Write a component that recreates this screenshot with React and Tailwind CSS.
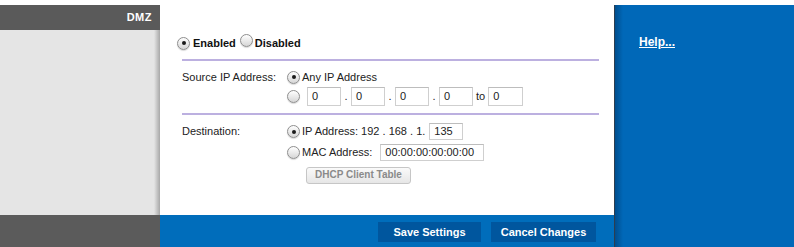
import React from 'react';

function Radio({ checked }) {
    return (
        <span className="relative inline-flex w-[13px] h-[13px] shrink-0 items-center justify-center rounded-full border border-[#8e8e8e] bg-gradient-to-b from-[#ffffff] to-[#d6d6d6] shadow-[0_1px_1px_rgba(0,0,0,0.15)]">
            {checked && <span className="w-[4px] h-[4px] rounded-full bg-[#1a1a1a]" />}
        </span>
    );
}

function Box({ value, className = '' }) {
    return (
        <span
            className={`inline-flex items-center border border-[#cfcfcf] border-t-[#bdbdbd] bg-white pl-[4px] text-[11px] text-[#333]${className ? ' ' + className : ''}`}
        >
            {value}
        </span>
    );
}

function Dot() {
    return <span className="w-[10px] text-center text-[11px] text-[#222]">.</span>;
}

export default function App() {
    const font = { fontFamily: '"Liberation Sans", Arial, sans-serif' };

    return (
        <div className="w-[794px] h-[247px] flex flex-col bg-white overflow-hidden" style={font}>
            {/* top strip */}
            <div className="h-[5px] bg-white" />

            <div className="flex flex-1">
                {/* Left menu column */}
                <div className="w-[160px] flex flex-col">
                    <div className="h-[25px] bg-[#5a5a5a] flex items-center justify-end pr-[8px]">
                        <span className="text-[11px] font-bold text-white tracking-[0.5px]">DMZ</span>
                    </div>
                    <div className="flex-1 flex">
                        <div className="flex-1 bg-[#e5e5e5]" />
                        <div className="w-[6px] bg-gradient-to-r from-[#e5e5e5] to-[#a8a8a8]" />
                    </div>
                    <div className="h-[32px] bg-[#5b5b5b]" />
                </div>

                {/* Main content */}
                <div className="w-[454px] flex flex-col">
                    <div className="flex-1 bg-white pl-[22px] pr-[15px] pt-[31px] text-[11px] text-[#222]">
                        {/* Enabled / Disabled */}
                        <div className="h-[14px] flex items-center -ml-[5px] font-bold text-[#111]">
                            <Radio checked />
                            <span className="ml-[3px]">Enabled</span>
                            <span className="ml-[4px]"><Radio /></span>
                            <span className="ml-[2px]">Disabled</span>
                        </div>

                        <div className="mt-[9px] h-[2px] bg-[#bcb0e0]" />

                        {/* Source IP */}
                        <div className="mt-[9px] h-[14px] flex items-center">
                            <span className="w-[105px]">Source IP Address:</span>
                            <Radio checked />
                            <span className="ml-[2px]">Any IP Address</span>
                        </div>
                        <div className="mt-[3px] h-[19px] flex items-center pl-[105px]">
                            <Radio />
                            <span className="ml-[7px] flex items-center">
                                <Box value="0" className="w-[34px] h-[19px]" />
                                <Dot />
                                <Box value="0" className="w-[34px] h-[19px]" />
                                <Dot />
                                <Box value="0" className="w-[34px] h-[19px]" />
                                <Dot />
                                <Box value="0" className="w-[34px] h-[19px]" />
                                <span className="ml-[3px] mr-[3px]">to</span>
                                <Box value="0" className="w-[35px] h-[19px]" />
                            </span>
                        </div>

                        <div className="mt-[7px] h-[2px] bg-[#bcb0e0]" />

                        {/* Destination */}
                        <div className="mt-[8px] h-[17px] flex items-center">
                            <span className="w-[105px]">Destination:</span>
                            <Radio checked />
                            <span className="ml-[2px]">IP Address: 192 . 168 . 1.</span>
                            <Box value="135" className="ml-[4px] w-[34px] h-[17px]" />
                        </div>
                        <div className="mt-[4px] h-[17px] flex items-center pl-[105px]">
                            <Radio />
                            <span className="ml-[2px]">MAC Address:</span>
                            <Box value="00:00:00:00:00:00" className="ml-[8px] w-[104px] h-[17px]" />
                        </div>
                        <div className="mt-[5px] pl-[124px]">
                            <button className="w-[105px] h-[17px] rounded-[3px] border border-[#c6c6c6] bg-gradient-to-b from-[#fafafa] to-[#e6e6e6] text-[10px] font-bold text-[#8a8a8a] leading-none">
                                DHCP Client Table
                            </button>
                        </div>
                    </div>

                    {/* Action bar */}
                    <div className="h-[32px] bg-[#006dbb] flex items-start justify-end pt-[7px] pr-[18px] gap-[10px]">
                        <button className="w-[103px] h-[20px] bg-[#00569e] text-[11px] font-bold text-white">
                            Save Settings
                        </button>
                        <button className="w-[105px] h-[20px] bg-[#00569e] text-[11px] font-bold text-white">
                            Cancel Changes
                        </button>
                    </div>
                </div>

                {/* Help column */}
                <div className="flex-1 flex bg-[#0068b8]">
                    <div className="w-[1px] bg-[#2d3d4f]" />
                    <div className="w-[8px] bg-gradient-to-r from-[#004e8e] to-[#0068b8]" />
                    <div className="flex-1 pl-[16px] pt-[24px]">
                        <a href="#" className="text-[12px] leading-[14px] font-bold text-white underline">
                            Help...
                        </a>
                    </div>
                </div>
            </div>
        </div>
    );
}
